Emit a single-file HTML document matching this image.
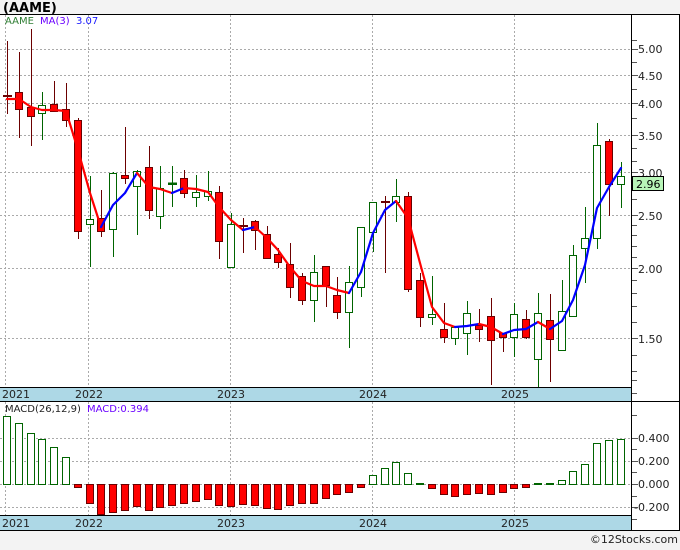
<!DOCTYPE html>
<html><head><meta charset="utf-8"><style>
html,body{margin:0;padding:0;background:#f3f3f3;}
body{width:680px;height:546px;overflow:hidden;position:relative;font-family:"DejaVu Sans","Liberation Sans",sans-serif;}
svg text{font-family:"DejaVu Sans","Liberation Sans",sans-serif;}
</style></head><body>
<svg width="680" height="546" xmlns="http://www.w3.org/2000/svg" shape-rendering="crispEdges">
<rect x="0" y="0" width="680" height="546" fill="#f3f3f3"/>
<text x="3" y="12" font-size="13" font-weight="bold" fill="#000">(AAME)</text>
<rect x="0" y="14" width="680" height="517" fill="#fff"/>
<!-- date bands -->
<rect x="0" y="387" width="631" height="14" fill="#add8e6"/>
<rect x="0" y="515" width="631" height="16" fill="#add8e6"/>
<g stroke="#000" stroke-width="1">
<line x1="0" y1="14.5" x2="680" y2="14.5"/>
<line x1="0" y1="387.5" x2="631" y2="387.5"/>
<line x1="0" y1="401.5" x2="680" y2="401.5"/>
<line x1="0" y1="515.5" x2="631" y2="515.5"/>
<line x1="0" y1="530.5" x2="680" y2="530.5"/>
<line x1="631.5" y1="14" x2="631.5" y2="531"/>
<line x1="679.5" y1="14" x2="679.5" y2="531"/>
</g>
<!-- grid -->
<g stroke="#aaa" stroke-width="1" stroke-dasharray="2,2">
<line x1="5.5" y1="15" x2="5.5" y2="387"/>
<line x1="88.5" y1="15" x2="88.5" y2="387"/>
<line x1="230.5" y1="15" x2="230.5" y2="387"/>
<line x1="372.5" y1="15" x2="372.5" y2="387"/>
<line x1="514.5" y1="15" x2="514.5" y2="387"/>
<line x1="5.5" y1="402" x2="5.5" y2="515"/>
<line x1="88.5" y1="402" x2="88.5" y2="515"/>
<line x1="230.5" y1="402" x2="230.5" y2="515"/>
<line x1="372.5" y1="402" x2="372.5" y2="515"/>
<line x1="514.5" y1="402" x2="514.5" y2="515"/>
<line x1="0" y1="49.5" x2="631" y2="49.5"/>
<line x1="0" y1="75.5" x2="631" y2="75.5"/>
<line x1="0" y1="103.5" x2="631" y2="103.5"/>
<line x1="0" y1="135.5" x2="631" y2="135.5"/>
<line x1="0" y1="172.5" x2="631" y2="172.5"/>
<line x1="0" y1="215.5" x2="631" y2="215.5"/>
<line x1="0" y1="268.5" x2="631" y2="268.5"/>
<line x1="0" y1="338.5" x2="631" y2="338.5"/>
<line x1="0" y1="438.5" x2="631" y2="438.5"/>
<line x1="0" y1="461.5" x2="631" y2="461.5"/>
<line x1="0" y1="484.5" x2="631" y2="484.5"/>
<line x1="0" y1="507.5" x2="631" y2="507.5"/>
</g>
<!-- axis ticks -->
<g stroke="#555" stroke-width="1">
<line x1="632" y1="40.5" x2="637" y2="40.5"/>
<line x1="632" y1="49.5" x2="638" y2="49.5"/>
<line x1="632" y1="62.5" x2="637" y2="62.5"/>
<line x1="632" y1="75.5" x2="638" y2="75.5"/>
<line x1="632" y1="89.5" x2="637" y2="89.5"/>
<line x1="632" y1="103.5" x2="638" y2="103.5"/>
<line x1="632" y1="118.5" x2="637" y2="118.5"/>
<line x1="632" y1="135.5" x2="638" y2="135.5"/>
<line x1="632" y1="148.5" x2="637" y2="148.5"/>
<line x1="632" y1="161.5" x2="637" y2="161.5"/>
<line x1="632" y1="172.5" x2="638" y2="172.5"/>
<line x1="632" y1="185.5" x2="637" y2="185.5"/>
<line x1="632" y1="199.5" x2="637" y2="199.5"/>
<line x1="632" y1="215.5" x2="638" y2="215.5"/>
<line x1="632" y1="225.5" x2="637" y2="225.5"/>
<line x1="632" y1="235.5" x2="637" y2="235.5"/>
<line x1="632" y1="246.5" x2="637" y2="246.5"/>
<line x1="632" y1="257.5" x2="637" y2="257.5"/>
<line x1="632" y1="268.5" x2="638" y2="268.5"/>
<line x1="632" y1="280.5" x2="637" y2="280.5"/>
<line x1="632" y1="293.5" x2="637" y2="293.5"/>
<line x1="632" y1="306.5" x2="637" y2="306.5"/>
<line x1="632" y1="322.5" x2="637" y2="322.5"/>
<line x1="632" y1="338.5" x2="638" y2="338.5"/>
<line x1="632" y1="355.5" x2="637" y2="355.5"/>
<line x1="632" y1="371.5" x2="637" y2="371.5"/>
<line x1="632" y1="380.5" x2="637" y2="380.5"/>
<line x1="632" y1="393.5" x2="637" y2="393.5"/>
<line x1="632" y1="415.5" x2="637" y2="415.5"/>
<line x1="632" y1="438.5" x2="638" y2="438.5"/>
<line x1="632" y1="449.5" x2="637" y2="449.5"/>
<line x1="632" y1="461.5" x2="638" y2="461.5"/>
<line x1="632" y1="472.5" x2="637" y2="472.5"/>
<line x1="632" y1="484.5" x2="638" y2="484.5"/>
<line x1="632" y1="496.5" x2="637" y2="496.5"/>
<line x1="632" y1="507.5" x2="638" y2="507.5"/>
<line x1="632" y1="519.5" x2="637" y2="519.5"/>
</g>
<g font-size="11" fill="#222">
<text x="638" y="53">5.00</text>
<text x="638" y="80">4.50</text>
<text x="638" y="108">4.00</text>
<text x="638" y="140">3.50</text>
<text x="638" y="177">3.00</text>
<text x="638" y="220">2.50</text>
<text x="638" y="273">2.00</text>
<text x="638" y="343">1.50</text>
<text x="638" y="442">0.400</text>
<text x="638" y="465">0.200</text>
<text x="638" y="488">0.000</text>
<text x="634" y="511">-0.200</text>
</g>
<g font-size="11" fill="#222">
<text x="2" y="398">2021</text><text x="75" y="398">2022</text><text x="217" y="398">2023</text><text x="359" y="398">2024</text><text x="501" y="398">2025</text>
<text x="2" y="527">2021</text><text x="75" y="527">2022</text><text x="217" y="527">2023</text><text x="359" y="527">2024</text><text x="501" y="527">2025</text>
</g>
<!-- candles -->
<g stroke-width="1">
<g stroke="#6b0000">
<line x1="7.5" y1="41" x2="7.5" y2="114"/><line x1="19.5" y1="52" x2="19.5" y2="138"/><line x1="31.5" y1="29" x2="31.5" y2="146"/><line x1="54.5" y1="81" x2="54.5" y2="112"/><line x1="66.5" y1="83" x2="66.5" y2="127"/><line x1="78.5" y1="118" x2="78.5" y2="239"/><line x1="101.5" y1="190" x2="101.5" y2="237"/><line x1="125.5" y1="127" x2="125.5" y2="184"/><line x1="149.5" y1="146" x2="149.5" y2="219"/><line x1="184.5" y1="170" x2="184.5" y2="198"/><line x1="219.5" y1="186" x2="219.5" y2="259"/><line x1="243.5" y1="218" x2="243.5" y2="253"/><line x1="255.5" y1="220" x2="255.5" y2="250"/><line x1="267.5" y1="226" x2="267.5" y2="259"/><line x1="278.5" y1="248" x2="278.5" y2="268"/><line x1="290.5" y1="243" x2="290.5" y2="298"/><line x1="302.5" y1="273" x2="302.5" y2="305"/><line x1="326.5" y1="266" x2="326.5" y2="307"/><line x1="337.5" y1="277" x2="337.5" y2="319"/><line x1="385.5" y1="196" x2="385.5" y2="273"/><line x1="408.5" y1="192" x2="408.5" y2="292"/><line x1="420.5" y1="273" x2="420.5" y2="327"/><line x1="444.5" y1="303" x2="444.5" y2="343"/><line x1="479.5" y1="309" x2="479.5" y2="342"/><line x1="491.5" y1="298" x2="491.5" y2="385"/><line x1="503.5" y1="333" x2="503.5" y2="352"/><line x1="526.5" y1="310" x2="526.5" y2="339"/><line x1="550.5" y1="294" x2="550.5" y2="382"/><line x1="609.5" y1="139" x2="609.5" y2="216"/>
</g>
<g stroke="#006400">
<line x1="42.5" y1="92" x2="42.5" y2="140"/><line x1="90.5" y1="176" x2="90.5" y2="267"/><line x1="113.5" y1="172" x2="113.5" y2="257"/><line x1="137.5" y1="170" x2="137.5" y2="235"/><line x1="160.5" y1="166" x2="160.5" y2="229"/><line x1="172.5" y1="166" x2="172.5" y2="207"/><line x1="196.5" y1="175" x2="196.5" y2="207"/><line x1="208.5" y1="171" x2="208.5" y2="201"/><line x1="231.5" y1="213" x2="231.5" y2="267"/><line x1="314.5" y1="255" x2="314.5" y2="322"/><line x1="349.5" y1="266" x2="349.5" y2="348"/><line x1="361.5" y1="227" x2="361.5" y2="297"/><line x1="373.5" y1="202" x2="373.5" y2="252"/><line x1="396.5" y1="179" x2="396.5" y2="222"/><line x1="432.5" y1="276" x2="432.5" y2="325"/><line x1="455.5" y1="327" x2="455.5" y2="345"/><line x1="467.5" y1="301" x2="467.5" y2="355"/><line x1="514.5" y1="303" x2="514.5" y2="357"/><line x1="538.5" y1="293" x2="538.5" y2="387"/><line x1="562.5" y1="280" x2="562.5" y2="350"/><line x1="573.5" y1="245" x2="573.5" y2="316"/><line x1="585.5" y1="207" x2="585.5" y2="283"/><line x1="597.5" y1="123" x2="597.5" y2="249"/><line x1="621.5" y1="162" x2="621.5" y2="208"/>
</g>
<g fill="#ff0000" stroke="#6b0000">
<rect x="3.5" y="95.5" width="8" height="1"/><rect x="15.5" y="92.5" width="7" height="17"/><rect x="27.5" y="107.5" width="7" height="9"/><rect x="50.5" y="104.5" width="7" height="7"/><rect x="62.5" y="109.5" width="7" height="11"/><rect x="74.5" y="120.5" width="7" height="111"/><rect x="97.5" y="218.5" width="7" height="13"/><rect x="121.5" y="175.5" width="7" height="3"/><rect x="145.5" y="167.5" width="7" height="43"/><rect x="180.5" y="178.5" width="7" height="15"/><rect x="215.5" y="192.5" width="7" height="49"/><rect x="239.5" y="225.5" width="8" height="1"/><rect x="251.5" y="221.5" width="7" height="9"/><rect x="263.5" y="234.5" width="7" height="24"/><rect x="274.5" y="254.5" width="7" height="8"/><rect x="286.5" y="264.5" width="7" height="23"/><rect x="298.5" y="276.5" width="7" height="24"/><rect x="322.5" y="266.5" width="7" height="19"/><rect x="333.5" y="295.5" width="7" height="17"/><rect x="381.5" y="201.5" width="8" height="1"/><rect x="404.5" y="196.5" width="7" height="93"/><rect x="416.5" y="280.5" width="7" height="37"/><rect x="440.5" y="329.5" width="7" height="8"/><rect x="475.5" y="325.5" width="7" height="4"/><rect x="487.5" y="316.5" width="7" height="24"/><rect x="499.5" y="333.5" width="7" height="4"/><rect x="522.5" y="319.5" width="7" height="18"/><rect x="546.5" y="320.5" width="7" height="19"/><rect x="605.5" y="141.5" width="7" height="43"/>
</g>
<g fill="#fff" stroke="#006400">
<rect x="38.5" y="105.5" width="7" height="8"/><rect x="86.5" y="219.5" width="7" height="5"/><rect x="109.5" y="173.5" width="7" height="56"/><rect x="133.5" y="171.5" width="7" height="15"/><rect x="156.5" y="188.5" width="7" height="28"/><rect x="168.5" y="183" width="8" height="1.5" fill="#006400"/><rect x="192.5" y="192.5" width="7" height="5"/><rect x="204.5" y="191.5" width="7" height="5"/><rect x="227.5" y="224.5" width="7" height="43"/><rect x="310.5" y="272.5" width="7" height="28"/><rect x="345.5" y="282.5" width="7" height="30"/><rect x="357.5" y="227.5" width="7" height="60"/><rect x="369.5" y="202.5" width="7" height="30"/><rect x="392.5" y="196.5" width="7" height="6"/><rect x="428.5" y="314.5" width="7" height="3"/><rect x="451.5" y="327.5" width="7" height="11"/><rect x="463.5" y="313.5" width="7" height="20"/><rect x="510.5" y="314.5" width="7" height="23"/><rect x="534.5" y="313.5" width="7" height="46"/><rect x="558.5" y="311.5" width="7" height="39"/><rect x="569.5" y="255.5" width="7" height="61"/><rect x="581.5" y="238.5" width="7" height="10"/><rect x="593.5" y="145.5" width="7" height="93"/><rect x="617.5" y="176.5" width="7" height="8"/>
</g>
</g>
<!-- MA line -->
<g fill="none" stroke-width="2.2" shape-rendering="auto" stroke-linejoin="round" stroke-linecap="round">
<polyline stroke="#ff0000" points="7,99 19,99 31,107 42,110 54,110 66,111 78,150 90,193 101,227"/>
<polyline stroke="#0000ff" points="101,227 113,205 125,193 137,173"/>
<polyline stroke="#ff0000" points="137,173 149,187 160,189 172,193"/>
<polyline stroke="#0000ff" points="172,193 184,188"/>
<polyline stroke="#ff0000" points="184,188 196,189 208,192 219,207 231,220 243,230"/>
<polyline stroke="#0000ff" points="243,230 255,227"/>
<polyline stroke="#ff0000" points="255,227 267,238 278,250 290,267 302,281 314,286 326,286 337,290 349,293"/>
<polyline stroke="#0000ff" points="349,293 361,272 373,233 385,210 396,201"/>
<polyline stroke="#ff0000" points="396,201 408,218 420,263 432,307 444,323 455,327"/>
<polyline stroke="#0000ff" points="455,327 467,326 479,324"/>
<polyline stroke="#ff0000" points="479,324 491,327 503,334"/>
<polyline stroke="#0000ff" points="503,334 514,330 526,329 538,322"/>
<polyline stroke="#ff0000" points="538,322 550,329"/>
<polyline stroke="#0000ff" points="550,329 562,321 573,300 585,265 597,208 609,187 621,168"/>
</g>
<rect x="632.5" y="176.5" width="31" height="14" fill="#b8f5b8" stroke="#000"/>
<text x="636" y="188" font-size="11" fill="#000">2.96</text>
<text x="5" y="24" font-size="10" fill="#2e7d32">AAME</text>
<text x="40" y="24" font-size="10" fill="#6a00ff">MA(3)</text>
<text x="76" y="24" font-size="10" fill="#1a1aff">3.07</text>
<!-- MACD -->
<g fill="#fff" stroke="#006400">
<rect x="3.5" y="416.5" width="7" height="68"/><rect x="15.5" y="423.5" width="7" height="61"/><rect x="27.5" y="433.5" width="7" height="51"/><rect x="38.5" y="439.5" width="7" height="45"/><rect x="50.5" y="447.5" width="7" height="37"/><rect x="62.5" y="457.5" width="7" height="27"/>
<rect x="369.5" y="475.5" width="7" height="9"/><rect x="381.5" y="468.5" width="7" height="16"/><rect x="392.5" y="462.5" width="7" height="22"/><rect x="404.5" y="473.5" width="7" height="11"/><rect x="416.5" y="483.5" width="7" height="1"/>
<rect x="534.5" y="483.5" width="7" height="1"/><rect x="546.5" y="483.5" width="7" height="1"/><rect x="558.5" y="480.5" width="7" height="4"/><rect x="569.5" y="471.5" width="7" height="13"/><rect x="581.5" y="464.5" width="7" height="20"/><rect x="593.5" y="443.5" width="7" height="41"/><rect x="605.5" y="440.5" width="7" height="44"/><rect x="617.5" y="439.5" width="7" height="45"/>
</g>
<g fill="#ff0000" stroke="#6b0000">
<rect x="74.5" y="484.5" width="7" height="3"/><rect x="86.5" y="484.5" width="7" height="19"/><rect x="97.5" y="484.5" width="7" height="30"/><rect x="109.5" y="484.5" width="7" height="28"/><rect x="121.5" y="484.5" width="7" height="26"/><rect x="133.5" y="484.5" width="7" height="22"/><rect x="145.5" y="484.5" width="7" height="26"/><rect x="156.5" y="484.5" width="7" height="23"/><rect x="168.5" y="484.5" width="7" height="21"/><rect x="180.5" y="484.5" width="7" height="19"/><rect x="192.5" y="484.5" width="7" height="17"/><rect x="204.5" y="484.5" width="7" height="15"/><rect x="215.5" y="484.5" width="7" height="21"/><rect x="227.5" y="484.5" width="7" height="22"/><rect x="239.5" y="484.5" width="7" height="20"/><rect x="251.5" y="484.5" width="7" height="21"/><rect x="263.5" y="484.5" width="7" height="24"/><rect x="274.5" y="484.5" width="7" height="25"/><rect x="286.5" y="484.5" width="7" height="21"/><rect x="298.5" y="484.5" width="7" height="19"/><rect x="310.5" y="484.5" width="7" height="19"/><rect x="322.5" y="484.5" width="7" height="14"/><rect x="333.5" y="484.5" width="7" height="10"/><rect x="345.5" y="484.5" width="7" height="8"/><rect x="357.5" y="484.5" width="7" height="3"/>
<rect x="428.5" y="484.5" width="7" height="4"/><rect x="440.5" y="484.5" width="7" height="10"/><rect x="451.5" y="484.5" width="7" height="12"/><rect x="463.5" y="484.5" width="7" height="10"/><rect x="475.5" y="484.5" width="7" height="9"/><rect x="487.5" y="484.5" width="7" height="10"/><rect x="499.5" y="484.5" width="7" height="8"/><rect x="510.5" y="484.5" width="7" height="4"/><rect x="522.5" y="484.5" width="7" height="3"/>
</g>
<text x="5" y="412" font-size="10" fill="#222">MACD(26,12,9)</text>
<text x="87" y="412" font-size="10" fill="#6a00ff">MACD:0.394</text>
<text x="678" y="543" font-size="11" fill="#222" text-anchor="end">©12Stocks.com</text>
</svg>
</body></html>
